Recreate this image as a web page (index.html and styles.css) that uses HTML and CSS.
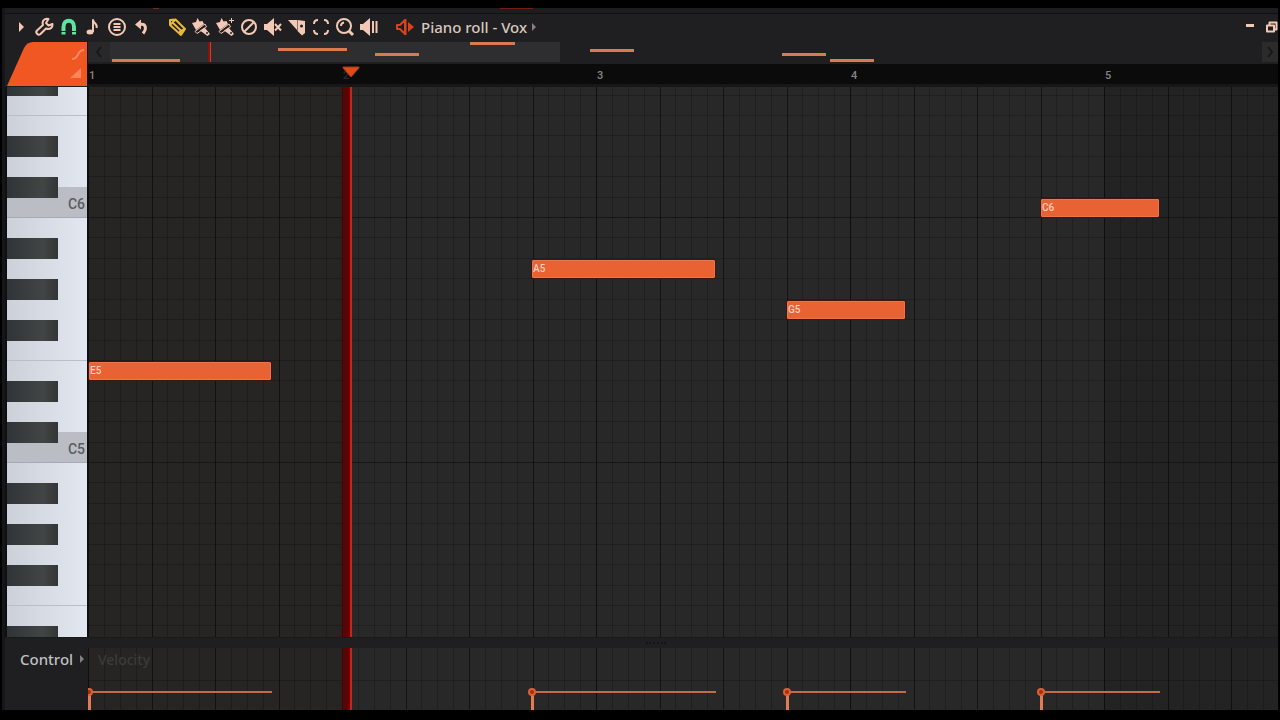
FILE: index.html
```html
<!DOCTYPE html>
<html lang="en">

<head>
    <meta charset="UTF-8" />
    <meta name="viewport" content="width=device-width, initial-scale=1.0" />
    <title>Piano roll - Vox</title>
    <link rel="stylesheet" href="styles.css">
</head>

<body>
    <div class="window">
        <div class="edge"></div>

        <header class="toolbar">
            <div class="tools">
                <button class="tool" aria-label="Menu"><svg viewBox="0 0 24 24"><path class="fill" d="M10 7l5 5-5 5z" /></svg></button>
                <button class="tool" aria-label="Tools"><svg viewBox="0 0 24 24"><path class="line" d="M19.5 9l-4 1.500-2.500-2.500 2.500-4c-4-1-7 2-5.500 6L4 15.500c-2 2 1 5.500 3.500 3.500L13 13.500c4 1.500 7-1 6.500-4.500z" /></svg></button>
                <button class="tool green" aria-label="Snap"><svg viewBox="0 0 24 24"><path class="thick" d="M6.500 19.500V12c0-8.500 10.500-8.500 10.500 0v7.500" /><path class="cut" d="M4 16.500h16" /></svg></button>
                <button class="tool" aria-label="Stamp"><svg viewBox="0 0 24 24"><ellipse class="fill" cx="9" cy="17" rx="3.500" ry="2.500" /><path class="line" d="M12 17V5c1 4 5 4 3.500 8" /></svg></button>
                <button class="tool" aria-label="View"><svg viewBox="0 0 24 24"><circle class="line" cx="12" cy="12" r="8" /><path class="line" d="M8.500 9h7M8.500 12h7M8.500 15h7" /></svg></button>
                <button class="tool" aria-label="Undo"><svg viewBox="0 0 24 24"><path class="fill" d="M6 9.500l6-5v10z" /><path class="curl" d="M11 9.500c6-1 7 4 3 9" /></svg></button>
            </div>
            <div class="tools">
                <button class="tool yellow" aria-label="Draw"><svg viewBox="0 0 24 24"><path class="line" d="M5 10V5l5.500-.5L20 14l-4 6zM5 10l5.500-5.500M7.500 7.500l10 9.500M16 20l-1-3.500 5-2.500" /></svg></button>
                <button class="tool" aria-label="Paint"><svg viewBox="0 0 24 24"><path class="fill" d="M3 8l4-1 1.500-4 2 3.500 3-.5 1.500 3-8 6z" /><path class="thin" d="M6 16.500l10-7.500 1.500 3L8 18.500z" /><path class="fill" d="M11 15.500l4.500-3 5.500 6.500-2.500 2z" /><circle class="hole" cx="18" cy="18" r="1" /></svg></button>
                <button class="tool" aria-label="Paint sequence"><svg viewBox="0 0 24 24"><path class="fill" d="M3 8l4-1 1.500-4 2 3.500 3-.5 1.500 3-8 6z" /><path class="thin" d="M6 16.500l10-7.500 1.500 3L8 18.500zM18.500 3v5M16 5.500h5" /><path class="fill" d="M11 15.500l4.500-3 5.500 6.500-2.500 2z" /><circle class="hole" cx="18" cy="18" r="1" /></svg></button>
                <button class="tool" aria-label="Delete"><svg viewBox="0 0 24 24"><circle class="line" cx="12" cy="12" r="7" /><path class="line" d="M7 17L17 7" /></svg></button>
                <button class="tool" aria-label="Mute"><svg viewBox="0 0 24 24"><path class="fill" d="M3 9h3l7-6v18l-7-6H3z" /><path class="line" d="M14 9l6 6.500M20 9l-6 6.500" /></svg></button>
                <button class="tool" aria-label="Slice"><svg viewBox="0 0 24 24"><path class="fill" d="M3 5h9v10z" /><path class="fill" d="M12.500 5l7.500 1v12l-3 2.500-4.500-4.500z" /><circle class="hole" cx="16.500" cy="11" r="1.500" /></svg></button>
                <button class="tool" aria-label="Select"><svg viewBox="0 0 24 24"><path class="line" d="M5 9q0-4 4-4M15 5q4 0 4 4M19 15q0 4-4 4M9 19q-4 0-4-4" /></svg></button>
                <button class="tool" aria-label="Zoom"><svg viewBox="0 0 24 24"><circle class="line" cx="11" cy="11" r="7" /><path class="line" d="M8 11q0-3 3-3.500" /><path class="curl" d="M16 16l4 4" /></svg></button>
                <button class="tool" aria-label="Playback"><svg viewBox="0 0 24 24"><path class="fill" d="M3 9h3l7-6v18l-7-6H3z" /><path class="line" d="M16 6v12M19.500 6v12" /></svg></button>
            </div>
            <button class="channel">
                <svg class="speaker" viewBox="0 0 24 24"><path class="line" d="M4 10h3l5-5v14l-5-5H4z" /><path class="line" d="M12.500 4v16" /><path class="fill" d="M15 7l6 5-6 5z" /></svg>
                <span>Piano roll - Vox</span>
                <svg class="arrow" viewBox="0 0 6 8"><path d="M1 0l4 4-4 4z" /></svg>
            </button>
            <div class="window-buttons">
                <button aria-label="Minimize"><svg viewBox="0 0 12 12"><path class="fill" d="M2 3h8v3H2z" /></svg></button>
                <button aria-label="Restore"><svg viewBox="0 0 12 12"><path class="line" d="M3.500 3.500V1.500h7v7h-2M1 4.500h7v6H1z" /></svg></button>
            </div>
        </header>

        <div class="top">
            <div class="corner">
                <svg viewBox="0 0 80 44">
                    <path class="tab" d="M0 44L17 6Q20 0 26 0H80V44z" />
                    <path class="slide" d="M65 17c8 0 4-9 12-9" />
                    <path class="ramp" d="M63 36l11-10v10z" />
                </svg>
            </div>
            <div class="timeline">
                <div class="overview">
                    <button class="scroll" aria-label="Scroll left"><svg viewBox="0 0 12 12"><path d="M8 1L4 6l4 5" /></svg></button>
                    <div class="map" id="map"></div>
                    <button class="scroll right" aria-label="Scroll right"><svg viewBox="0 0 12 12"><path d="M4 1l4 5-4 5" /></svg></button>
                </div>
                <div class="ruler" id="ruler"></div>
            </div>
        </div>

        <div class="roll">
            <div class="keys" id="keys"></div>
            <div class="lane notes" id="notes"></div>
        </div>

        <div class="splitter"><span></span></div>

        <div class="control">
            <button class="control-name">
                <span>Control</span>
                <svg class="arrow" viewBox="0 0 6 8"><path d="M1 0l4 4-4 4z" /></svg>
            </button>
            <div class="lane velocity" id="velocity">
                <span class="lane-title">Velocity</span>
            </div>
        </div>
    </div>

    <script src="script.js"></script>
</body>

</html>
```

FILE: styles.css
```css
* {
    margin: 0;
    padding: 0;
    box-sizing: border-box;
}

body {
    height: 100vh;
    padding: 8px 2px 10px;
    background: #000;
    font-family: "Noto Sans", "Open Sans", sans-serif;
    overflow: hidden;
}

button {
    border: none;
    background: none;
    font: inherit;
    color: inherit;
    cursor: pointer;
}

svg {
    display: block;
}

.window {
    height: 100%;
    display: flex;
    flex-direction: column;
    background: #1f1f21;
    border-left: 3px solid #141618;
}

.edge {
    height: 6px;
    flex: none;
    border-bottom: 1px solid #111;
    background: linear-gradient(#7a2a18, #7a2a18) 148px 0 / 6px 1px no-repeat,
        linear-gradient(#7a1c10, #7a1c10) 495px 0 / 33px 1px no-repeat,
        #1d1d1f;
}

/* toolbar */

.toolbar {
    height: 28px;
    flex: none;
    display: flex;
    align-items: center;
    gap: 12px;
    padding: 0 0 2px 4px;
    color: #f3c9b5;
}

.tools {
    display: flex;
}

.tool {
    width: 24px;
    height: 24px;
}

.tool svg,
.speaker {
    width: 24px;
    height: 24px;
}

.tool:hover {
    color: #fff;
}

.green {
    color: #5fe3a1;
}

.yellow {
    color: #e8b838;
}

.fill {
    fill: currentColor;
}

.line,
.curl,
.thin,
.thick {
    fill: none;
    stroke: currentColor;
    stroke-width: 2;
    stroke-linejoin: round;
}

.thin {
    stroke-width: 1;
}

.curl {
    stroke-width: 3;
}

.thick {
    stroke-width: 4;
}

.cut {
    stroke: #1f1f21;
    stroke-width: 1;
}

.hole {
    fill: #1f1f21;
}

.channel {
    display: flex;
    align-items: center;
    gap: 4px;
    font-size: 15px;
    font-weight: 500;
    line-height: 20px;
    color: #d8c8bd;
}

.speaker {
    color: #d9431b;
}

.arrow {
    width: 6px;
    height: 8px;
    fill: #85807d;
}

.window-buttons {
    display: flex;
    gap: 10px;
    margin-left: auto;
}

.window-buttons svg {
    width: 12px;
    height: 12px;
}

/* overview and ruler */

.top {
    height: 45px;
    flex: none;
    display: flex;
}

.corner {
    width: 83px;
    padding-left: 2px;
    border-right: 1px solid #0c0c0c;
}

.corner svg {
    width: 80px;
    height: 44px;
}

.tab {
    fill: #f05722;
}

.slide {
    fill: none;
    stroke: #ff8a5e;
    stroke-width: 2;
}

.ramp {
    fill: #ff8558;
}

.timeline {
    flex: 1;
    min-width: 0;
    display: flex;
    flex-direction: column;
}

.overview {
    height: 22px;
    display: flex;
    padding-bottom: 2px;
}

.scroll {
    width: 22px;
    display: flex;
    align-items: center;
    justify-content: center;
    background: #28282a;
}

.scroll.right {
    width: 16px;
    background: #2b2b2c;
}

.scroll svg {
    width: 12px;
    height: 12px;
    fill: none;
    stroke: #171717;
    stroke-width: 2;
}

.map {
    position: relative;
    flex: 1;
    background: linear-gradient(#2e2e30, #2e2e30) 0 0 / 450px 100% no-repeat;
}

.map-note {
    position: absolute;
    height: 3px;
    background: #d97a4f;
}

.map-play {
    position: absolute;
    top: 0;
    bottom: 0;
    width: 3px;
    background: #8a120a;
    border-right: 1px solid #c9412c;
}

.ruler {
    position: relative;
    flex: 1;
    background: #0b0b0b;
    border-bottom: 3px solid #171717;
    font-family: Roboto, sans-serif;
    font-size: 11px;
    font-weight: 500;
    line-height: 20px;
    color: #858585;
}

.ruler span {
    position: absolute;
    top: 2px;
}

.ruler .under {
    color: #2c2c2c;
}

.marker {
    position: absolute;
    top: 2px;
    width: 18px;
    height: 12px;
    fill: #e04a17;
    stroke: #a8391a;
}

/* piano roll */

.roll {
    flex: 1;
    min-height: 0;
    display: flex;
}

.keys {
    width: 83px;
    border-left: 2px solid #0d1012;
    border-right: 1px solid #0b0d0e;
    overflow: hidden;
    background: linear-gradient(90deg, #ccd1d9, #e3e7f1);
}

.key {
    font-family: Roboto, sans-serif;
    font-size: 14px;
    font-weight: 500;
    line-height: 12px;
    text-align: right;
    padding-right: 2px;
    color: #5a5d62;
}

.key.sharp::before {
    content: "";
    display: block;
    width: 51px;
    height: 100%;
    background: linear-gradient(90deg, #303436, #414544 70%, #333636);
}

.key.c {
    background: #babdc4;
    border-bottom: 1px solid #a7aab1;
}

.key.c-sharp {
    background: linear-gradient(transparent 10px, #babdc4 10px);
}

.key.f {
    border-bottom: 1px solid #b9bec7;
}

.lane {
    position: relative;
    flex: 1;
    min-width: 0;
    overflow: hidden;
    background: #282828;
}

.grid {
    position: absolute;
    inset: 0;
    width: 100%;
    height: 100%;
}

.played {
    fill: #262524;
}

.after {
    fill: #232323;
}

.step {
    fill: #000;
    opacity: 0.2;
}

.beat {
    fill: #000;
    opacity: 0.4;
}

.bar {
    fill: #0e0e0e;
}

.note {
    position: absolute;
    height: 18px;
    border: 1px solid #ed7548;
    border-radius: 1px;
    background: #e86234;
    box-shadow: 0 0 0 1px #3a1810;
    font-family: Roboto, sans-serif;
    font-size: 10px;
    font-weight: 500;
    line-height: 16px;
    color: #ffd0bc;
}

.playhead {
    position: absolute;
    top: 0;
    bottom: 0;
    width: 12px;
    background: linear-gradient(90deg, transparent, #590300 5px, #6c0300);
    border-right: 2px solid #bd2a1c;
}

.splitter {
    height: 11px;
    flex: none;
    display: flex;
    align-items: center;
    justify-content: center;
    border-top: 1px solid #1a1a1a;
}

.splitter span {
    width: 20px;
    margin-left: 28px;
    border-top: 2px dotted #151515;
}

/* control lane */

.control {
    height: 62px;
    flex: none;
    display: flex;
}

.control-name {
    width: 83px;
    display: flex;
    align-items: center;
    align-self: flex-start;
    gap: 6px;
    padding: 1px 0 0 15px;
    font-size: 15px;
    font-weight: 500;
    line-height: 20px;
    color: #bfc0c2;
}

.lane-title {
    position: absolute;
    top: 2px;
    left: 10px;
    font-size: 14px;
    font-weight: 500;
    line-height: 20px;
    color: #3c3b3a;
}

.stick {
    position: absolute;
    bottom: 0;
    height: 19px;
    border-top: 2px solid #c4694a;
}

.stick::before {
    content: "";
    position: absolute;
    left: -2px;
    top: 0;
    width: 3px;
    height: 17px;
    background: #e57b52;
}

.stick::after {
    content: "";
    position: absolute;
    left: -5px;
    top: -5px;
    width: 4px;
    height: 4px;
    border: 2px solid #dc5f36;
    border-radius: 50%;
    background: #a52f0c;
}
```

FILE: script.js
```javascript
const BAR = 254;
const OCTAVE = 245;
const ROW = OCTAVE / 12;
const C6_BOTTOM = 131;
const PLAY = 264;
const names = ["C", "C#", "D", "D#", "E", "F", "F#", "G", "G#", "A", "A#", "B"];

// start and length in pixels of the lane, row = semitones from C6
const notes = [
    { name: "E5", x: 1, w: 182, row: -8 },
    { name: "A5", x: 444, w: 183, row: -3 },
    { name: "G5", x: 699, w: 118, row: -5 },
    { name: "C6", x: 953, w: 118, row: 0 }
];

const mapNotes = [
    [2, 68, 17], [168, 69, 6], [265, 44, 11], [360, 45, 0],
    [480, 44, 7], [672, 44, 11], [720, 44, 17]
];

function rowBottom(row) {
    return Math.round(C6_BOTTOM - row * ROW);
}

function add(parent, className, text) {
    const el = document.createElement("div");
    el.className = className;
    el.textContent = text || "";
    parent.appendChild(el);
    return el;
}

function drawKeys() {
    const keys = document.getElementById("keys");
    for (let row = 6; row >= -21; row--) {
        const name = names[(row + 24) % 12];
        const top = Math.max(0, rowBottom(row + 1));
        const el = add(keys, "key", name === "C" ? "C" + (6 + row / 12) : "");
        if (name.includes("#")) el.classList.add("sharp");
        if (name === "C") el.classList.add("c");
        if (name === "C#") el.classList.add("c-sharp");
        if (name === "F") el.classList.add("f");
        el.style.height = rowBottom(row) - top + "px";
    }
}

function drawGrid(lane, rows) {
    const w = lane.clientWidth;
    const h = lane.clientHeight;
    let out = `<rect class="played" width="${PLAY}" height="${h}"/>`;
    out += `<rect class="after" x="${BAR * 4 + 1}" width="${w}" height="${h}"/>`;
    rows.forEach(r => {
        out += `<rect class="${r.type}" y="${r.y}" width="${w}" height="1"/>`;
    });
    ["step", "beat", "bar"].forEach((type, level) => {
        const parts = [16, 4, 1][level];
        for (let i = 0; i * BAR / parts < w; i++) {
            const x = Math.round(i * BAR / parts);
            out += `<rect class="${type}" x="${x}" width="1" height="${h}"/>`;
        }
    });
    lane.insertAdjacentHTML("afterbegin", `<svg class="grid">${out}</svg>`);
}

function drawPlayhead(lane) {
    add(lane, "playhead").style.left = PLAY - 12 + "px";
}

function drawNotes() {
    const lane = document.getElementById("notes");
    const velocity = document.getElementById("velocity");
    const rows = [];
    for (let row = 6; row >= -21; row--) {
        rows.push({ y: rowBottom(row) - 1, type: row % 12 === 0 ? "beat" : "step" });
    }
    drawGrid(lane, rows);
    drawGrid(velocity, [{ y: 32, type: "step" }]);

    notes.forEach(n => {
        const el = add(lane, "note", n.name);
        el.style.left = n.x + "px";
        el.style.top = rowBottom(n.row) - 19 + "px";
        el.style.width = n.w + "px";

        const stick = add(velocity, "stick");
        stick.style.left = n.x + 1 + "px";
        stick.style.width = n.w + "px";
    });
    drawPlayhead(lane);
    drawPlayhead(velocity);
}

function drawTimeline() {
    const map = document.getElementById("map");
    mapNotes.forEach(([x, w, y]) => {
        const el = add(map, "map-note");
        el.style.left = x + "px";
        el.style.top = y + "px";
        el.style.width = w + "px";
    });
    add(map, "map-play").style.left = "98px";

    const ruler = document.getElementById("ruler");
    for (let i = 0; i * BAR < ruler.clientWidth; i++) {
        const label = document.createElement("span");
        label.textContent = i + 1;
        label.style.left = i * BAR + 1 + "px";
        // the number under the marker is dimmed
        if (Math.abs(i * BAR - PLAY) < 20) label.className = "under";
        ruler.appendChild(label);
    }
    ruler.insertAdjacentHTML("beforeend",
        `<svg class="marker" style="left:${PLAY - 10}px" viewBox="0 0 18 12"><path d="M1 1h16v1L9 11 1 2z"/></svg>`);
}

drawKeys();
drawNotes();
drawTimeline();
```
